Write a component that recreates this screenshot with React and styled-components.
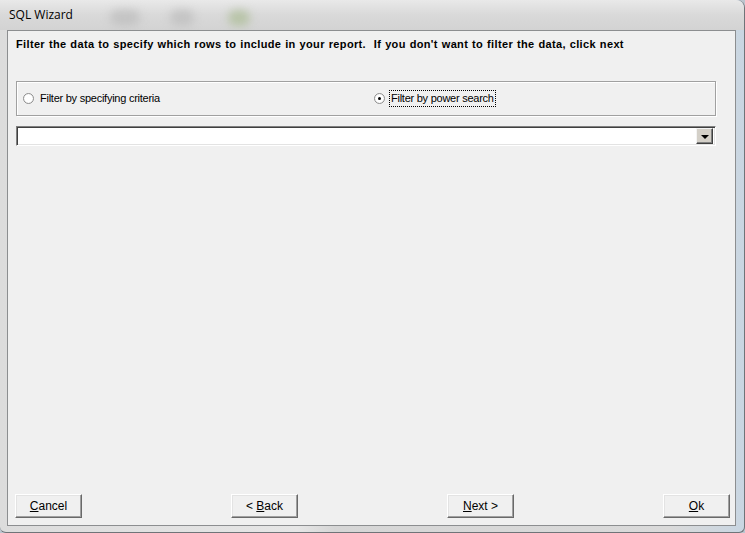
import React from "react";
import styled, { createGlobalStyle } from "styled-components";

const GlobalStyle = createGlobalStyle`
  html, body {
    margin: 0;
    padding: 0;
    background: #bcc6cf;
  }
  body {
    width: 745px;
    height: 533px;
    overflow: hidden;
  }
`;

const App = () => {
  return (
    <>
      <GlobalStyle />
      <Window>
        <TitleBar>
          <Blob style={{ left: 110, width: 30 }} />
          <Blob style={{ left: 170, width: 24 }} />
          <Blob style={{ left: 228, width: 22 }} tint="#b8c4a8" />
          <Title>SQL Wizard</Title>
        </TitleBar>
        <Panel>
          <Heading>
            Filter the data to specify which rows to include in your report.
            {"\u00a0\u00a0"}If you don't want to filter the data, click next
          </Heading>
          <Group>
            <Option>
              <Radio />
              <Label>Filter by specifying criteria</Label>
            </Option>
            <Option>
              <Radio checked />
              <Label focused>Filter by power search</Label>
            </Option>
          </Group>
          <Combo>
            <ComboField />
            <DropButton>
              <Arrow />
            </DropButton>
          </Combo>
          <Buttons>
            <Button>
              <u>C</u>ancel
            </Button>
            <Button>
              {"<\u00a0"}
              <u>B</u>ack
            </Button>
            <Button>
              <u>N</u>ext{"\u00a0>"}
            </Button>
            <Button>
              <u>O</u>k
            </Button>
          </Buttons>
        </Panel>
      </Window>
    </>
  );
};

const Window = styled.div`
  width: 745px;
  height: 533px;
  box-sizing: border-box;
  display: flex;
  flex-direction: column;
  padding: 0 8px 6px 7px;
  border: 1px solid #6f7478;
  border-top: none;
  border-left: none;
  border-radius: 0 8px 6px 6px;
  background: linear-gradient(90deg, #dcdcdc 0%, #e6e6e6 40%, #d6d6d6 45%, #dadada 90%, #c9d6e2 100%);
`;

const TitleBar = styled.div`
  height: 30px;
  position: relative;
  display: flex;
  align-items: center;
  margin: 0 -8px 0 -7px;
  padding-left: 9px;
  border-radius: 0 8px 0 0;
  background: linear-gradient(180deg, #e9e9e9 0%, #d9d9d9 50%, #d3d3d3 100%);
  overflow: hidden;
`;

const Blob = styled.div`
  position: absolute;
  top: 10px;
  height: 16px;
  border-radius: 8px;
  background: ${(p) => p.tint || "#c4c4c4"};
  filter: blur(4px);
`;

const Title = styled.span`
  position: relative;
  font-family: "Open Sans", "Noto Sans", sans-serif;
  font-size: 12px;
  color: #000;
  margin-top: -2px;
`;

const Panel = styled.div`
  flex: 1;
  display: flex;
  flex-direction: column;
  background: #f0f0f0;
  border: 1px solid #8c8e90;
  padding: 7px 5px 7px 7px;
  font-family: "Liberation Sans", Arial, sans-serif;
  font-size: 11px;
  color: #000;
`;

const Heading = styled.div`
  font-weight: bold;
  font-size: 11px;
  letter-spacing: 0.35px;
  word-spacing: 0.5px;
  line-height: 13px;
  padding-left: 1px;
`;

const Group = styled.div`
  margin-top: 30px;
  width: 700px;
  height: 35px;
  box-sizing: border-box;
  margin-left: 1px;
  border: 1px solid #a0a0a0;
  box-shadow: inset 1px 1px 0 #fff, 1px 1px 0 #fff;
  display: grid;
  grid-template-columns: 351px 1fr;
  align-items: center;
  padding-left: 6px;
`;

const Option = styled.div`
  display: flex;
  align-items: center;
  gap: 4px;
`;

const Radio = styled.span`
  width: 11px;
  height: 11px;
  box-sizing: border-box;
  border-radius: 50%;
  border: 1px solid #8f8f8f;
  background: radial-gradient(circle, #fff 55%, #e0e0e0 100%);
  position: relative;
  &::after {
    content: "";
    display: ${(p) => (p.checked ? "block" : "none")};
    position: absolute;
    left: 3px;
    top: 3px;
    width: 3px;
    height: 3px;
    border-radius: 50%;
    background: #000;
  }
`;

const Label = styled.span`
  padding: 1px 1px;
  line-height: 13px;
  letter-spacing: -0.25px;
  border: 1px dotted ${(p) => (p.focused ? "#000" : "transparent")};
`;

const Combo = styled.div`
  margin-top: 10px;
  margin-left: 1px;
  width: 700px;
  height: 20px;
  box-sizing: border-box;
  display: flex;
  background: #fff;
  border-top: 1px solid #808080;
  border-left: 1px solid #808080;
  border-right: 1px solid #fff;
  border-bottom: 1px solid #fff;
  box-shadow: inset 1px 1px 0 #404040, inset -1px -1px 0 #e3e3e3;
  padding: 2px 2px 1px 2px;
`;

const ComboField = styled.div`
  flex: 1;
`;

const DropButton = styled.div`
  width: 17px;
  height: 16px;
  margin-top: -1px;
  box-sizing: border-box;
  background: #d4d0c8;
  border-top: 1px solid #f4f4f4;
  border-left: 1px solid #f4f4f4;
  border-right: 1px solid #404040;
  border-bottom: 1px solid #404040;
  box-shadow: inset -1px -1px 0 #808080;
  display: flex;
  align-items: center;
  justify-content: center;
`;

const Arrow = styled.span`
  width: 0;
  height: 0;
  border-left: 4px solid transparent;
  border-right: 4px solid transparent;
  border-top: 4px solid #000;
  margin-top: 1px;
`;

const Buttons = styled.div`
  margin-top: auto;
  display: flex;
  justify-content: space-between;
`;

const Button = styled.div`
  width: 67px;
  height: 24px;
  box-sizing: border-box;
  display: flex;
  align-items: center;
  justify-content: center;
  background: #f0f0f0;
  border-top: 1px solid #fff;
  border-left: 1px solid #fff;
  border-right: 1px solid #696969;
  border-bottom: 1px solid #696969;
  box-shadow: inset -1px -1px 0 #a0a0a0, inset 1px 1px 0 #e3e3e3;
  font-size: 12px;
  u {
    text-decoration: underline;
  }
`;

export default App;
